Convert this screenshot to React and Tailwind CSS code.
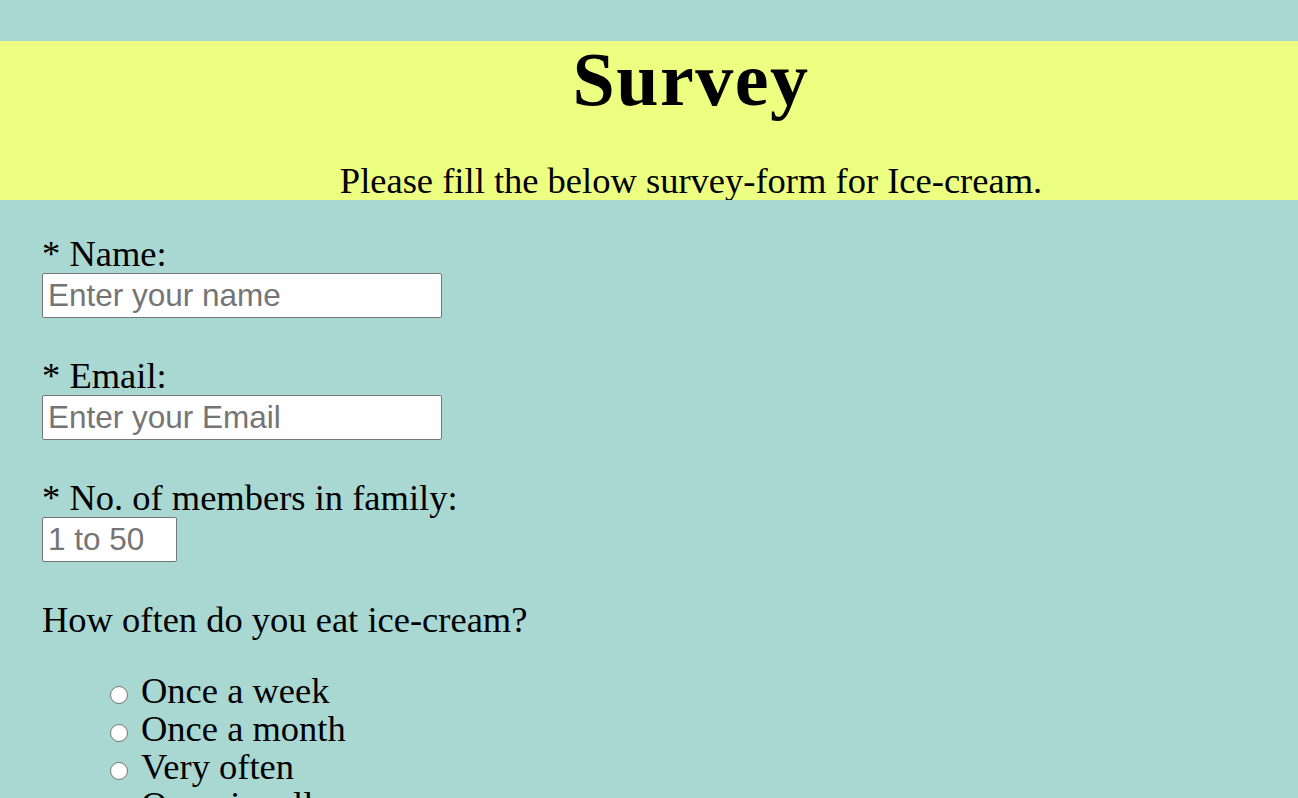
import React from "react";

const serif = { fontFamily: '"Liberation Serif", "Times New Roman", serif' };

function Field({ label, placeholder, width, type = "text" }) {
  return (
    <div className="mb-[38px]">
      <div className="h-[39px] leading-[39px] whitespace-nowrap">{label}</div>
      <input
        type={type}
        placeholder={placeholder}
        className={`${width} h-[45px] block bg-white border border-[#767676] rounded-[2px] pl-[5px] text-[31.5px] text-black placeholder:text-[#757575] outline-none font-['Liberation_Sans',Arial,sans-serif]`}
      />
    </div>
  );
}

function Radio({ label }) {
  return (
    <li className="flex items-start h-[38px] leading-[38px] whitespace-nowrap">
      <input
        type="radio"
        name="often"
        className="appearance-none w-[18px] h-[18px] mt-[14px] rounded-full border border-[#767676] bg-white shrink-0"
      />
      <span className="ml-[13px]">{label}</span>
    </li>
  );
}

export default function App() {
  return (
    <div
      className="min-h-screen bg-[#a9d7d2] text-black text-[36.5px] pt-[41px]"
      style={serif}
    >
      <header className="h-[159px] bg-[#ecff80] pl-[84px] pt-[1px] overflow-hidden text-center">
        <h1 className="text-[76px] leading-[84px] font-bold tracking-[1.5px] -mt-[5px]">Survey</h1>
        <p className="mt-[40px] h-[39px] leading-[39px] whitespace-nowrap">
          Please fill the below survey-form for Ice-cream.
        </p>
      </header>
      <form className="pl-[42px] pt-[34px]">
        <Field label="* Name:" placeholder="Enter your name" width="w-[400px]" />
        <Field label="* Email:" placeholder="Enter your Email" width="w-[400px]" type="email" />
        <Field label="* No. of members in family:" placeholder="1 to 50" width="w-[135px]" type="number" />
        <div className="h-[39px] leading-[39px] whitespace-nowrap">How often do you eat ice-cream?</div>
        <ul className="mt-[33px] pl-[68px]">
          <Radio label="Once a week" />
          <Radio label="Once a month" />
          <Radio label="Very often" />
          <Radio label="Occasionally" />
          <Radio label="Never" />
        </ul>
      </form>
    </div>
  );
}
